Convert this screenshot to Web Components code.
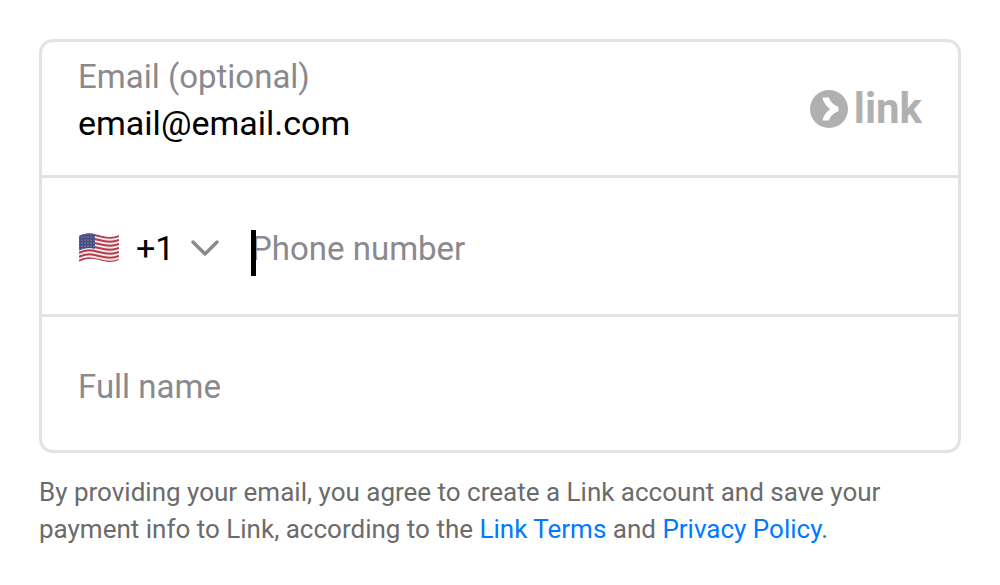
<!DOCTYPE html>
<html lang="en">
<head>
<meta charset="utf-8">
<meta name="viewport" content="width=device-width, initial-scale=1">
<title>Link sign-up</title>
<style>
  body { margin: 0; background: #fff; font-family: Roboto, sans-serif; color: #000; }
</style>
</head>
<body>
<link-signup></link-signup>
<script>
const define = (name, html, setup) => {
  const template = document.createElement('template');
  template.innerHTML = html;
  customElements.define(name, class extends HTMLElement {
    constructor() {
      super();
      const root = this.attachShadow({ mode: 'open' });
      root.append(template.content.cloneNode(true));
      if (setup) setup.call(this, root);
    }
  });
};

define('link-logo', `
  <style>
    :host { display: flex; align-items: center; gap: 6px; color: #b0b0b0; font: 700 42px/42px Roboto, sans-serif; }
    svg { display: block; width: 38px; height: 38px; }
  </style>
  <svg viewBox="0 0 38 38" aria-hidden="true">
    <circle cx="19" cy="19" r="19" fill="currentColor"/>
    <path d="M12.4 7.400h6.600c.8 3.800 4.200 7.300 9.400 9.300v4.600c-5.200 2-8.600 5.500-9.400 9.300h-6.600c1-4.800 3.800-8.600 7.800-11.600-4-3-6.800-6.800-7.800-11.600z" fill="#fff"/>
  </svg>
  <span>link</span>
`);

define('us-flag', `
  <style>
    :host { display: block; }
    svg { display: block; width: 42px; height: 30px; }
  </style>
  <svg viewBox="0 0 42 30" role="img" aria-label="United States">
    <defs>
      <clipPath id="c"><path d="M1 3C8-1 14 0 21 2s13 3 20 0v25c-7 3-13 2-20 0S8 25 1 29z"/></clipPath>
      <pattern id="s" width="3" height="3" patternUnits="userSpaceOnUse"><circle cx="1" cy="1" r=".6" fill="#c5c4dc"/></pattern>
    </defs>
    <g clip-path="url(#c)">
      <rect width="42" height="30" fill="#f3eeee"/>
      <g id="stripes" fill="none" stroke="#b83a4b" stroke-width="2"></g>
      <path d="M0 0h17v16c-6-2-11-1-17 2z" fill="#464a80"/>
      <path d="M0 0h17v16c-6-2-11-1-17 2z" fill="url(#s)"/>
    </g>
  </svg>
`, function (root) {
  const group = root.getElementById('stripes');
  for (let i = 0; i < 7; i++) {
    const p = document.createElementNS('http://www.w3.org/2000/svg', 'path');
    p.setAttribute('d', `M1 ${4 + i * 4}c7-4 13-3 20-1s13 3 20 0`);
    group.append(p);
  }
});

define('country-select', `
  <style>
    :host { display: grid; grid-template-columns: 42px 16px 39px 16px 28px; align-items: center; flex: none; }
    us-flag { grid-area: 1 / 1; }
    select { grid-area: 1 / 3 / 2 / 6; appearance: none; border: 0; margin: 0; padding: 0; background: none; outline: 0;
             font: 34px/40px Roboto, sans-serif; color: #000; }
    svg { grid-area: 1 / 5; width: 28px; height: 16px; pointer-events: none; }
  </style>
  <us-flag></us-flag>
  <select aria-label="Country code"><option>+1</option></select>
  <svg viewBox="0 0 28 16" fill="none" stroke="#8a8a8e" stroke-width="3.400" stroke-linecap="round" stroke-linejoin="round" aria-hidden="true">
    <path d="M2 2l12 12L26 2"/>
  </svg>
`);

define('form-row', `
  <style>
    :host { display: flex; align-items: center; min-height: 133px; padding: 0 36px; }
    :host(:not([labelled])) { box-sizing: border-box; min-height: 136px; padding-top: 4px; }
    :host([active]:not([labelled])) { min-height: 139px; }
    .field { flex: 1; min-width: 0; }
    ::slotted(country-select) { margin-right: 32px; }
    .line { position: relative; }
    label, input { display: block; font: 34px/46px Roboto, sans-serif; }
    label { font-size: 33px; color: #8a8a8e; }
    label[hidden] { display: none; }
    input { box-sizing: border-box; width: 100%; border: 0; margin: 0; padding: 0; background: none; outline: 0; color: #000; caret-color: transparent; }
    input::placeholder { font-size: 33px; color: #8a8a8e; opacity: 1; }
    .caret { display: none; position: absolute; left: 0; top: 5px; width: 5px; height: 46px; background: #000; }
    :host([labelled]) .field { padding-bottom: 18px; }
    :host([active]) .caret { display: block; }
  </style>
  <slot name="before"></slot>
  <div class="field">
    <label for="i"></label>
    <div class="line"><input id="i"><span class="caret"></span></div>
  </div>
  <slot name="after"></slot>
`, function (root) {
  const input = root.querySelector('input'), label = root.querySelector('label');
  const text = this.getAttribute('label');
  input.type = this.getAttribute('type') || 'text';
  if (this.hasAttribute('labelled')) {
    label.textContent = text;
    input.value = this.getAttribute('value') || '';
  } else {
    label.hidden = true;
    input.placeholder = text;
    input.setAttribute('aria-label', text);
  }
});

define('link-signup', `
  <style>
    :host { display: block; padding: 39px; }
    form { border: 3px solid #e3e3e3; border-radius: 14px; }
    form-row + form-row { border-top: 3px solid #e3e3e3; }
    p { margin: 21px 0 0; font-size: 26px; line-height: 37px; color: #6b6b6b; }
    a { color: #007aff; text-decoration: none; }
  </style>
  <form>
    <form-row labelled type="email" label="Email (optional)" value="email@email.com"><link-logo slot="after"></link-logo></form-row>
    <form-row active type="tel" label="Phone number"><country-select slot="before"></country-select></form-row>
    <form-row label="Full name"></form-row>
  </form>
  <p>By providing your email, you agree to create a Link account and save your payment info to Link, according to the <a href="#terms">Link Terms</a> and <a href="#privacy">Privacy Policy</a>.</p>
`);
</script>
</body>
</html>
